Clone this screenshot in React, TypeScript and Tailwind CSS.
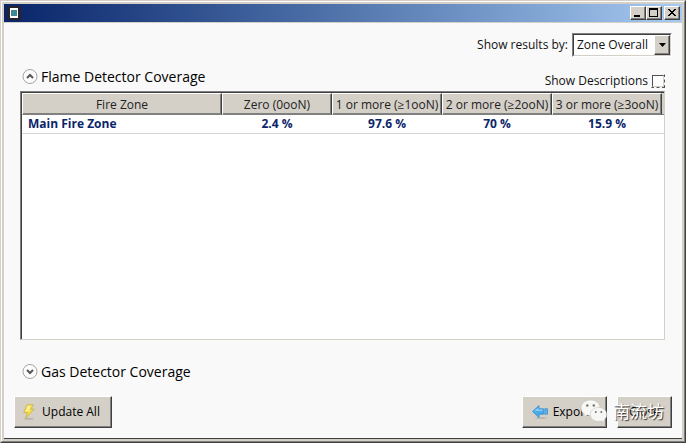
import React from "react";

const columns = ["Fire Zone", "Zero (0ooN)", "1 or more (≥1ooN)", "2 or more (≥2ooN)", "3 or more (≥3ooN)"];
const rows = [["Main Fire Zone", "2.4 %", "97.6 %", "70 %", "15.9 %"]];

const raised =
  "bg-[#d4d0c8] border border-t-white border-l-white border-r-[#404040] border-b-[#404040] shadow-[inset_-1px_-1px_0_#808080]";

function AppIcon() {
  return (
    <svg width="14" height="14" viewBox="0 0 14 14" aria-hidden="true">
      <rect width="14" height="14" rx="2" fill="#25232b" />
      <rect x="3" y="2" width="8" height="10" fill="#fff" />
      <rect x="4" y="4" width="6" height="6" fill="#3f8797" />
    </svg>
  );
}

function CaptionButton({ label, children }: { label: string; children: React.ReactNode }) {
  return (
    <button aria-label={label} className={`flex h-[14px] w-4 items-center justify-center ${raised}`}>
      <svg width="12" height="12" viewBox="0 0 12 12" className="shrink-0" shapeRendering="crispEdges">
        {children}
      </svg>
    </button>
  );
}

function TitleBar() {
  return (
    <header className="flex h-[18px] items-center justify-between bg-linear-to-r from-[#0a246a] to-[#a6caf0] pr-[2px] pl-[3px]">
      <AppIcon />
      <div className="flex">
        <CaptionButton label="Minimize">
          <rect x="2" y="8" width="6" height="2" fill="#000" />
        </CaptionButton>
        <CaptionButton label="Maximize">
          <path d="M1 1h9v9H1z M2 3v6h7V3z" fill="#000" fillRule="evenodd" />
        </CaptionButton>
        <div className="w-[2px]" />
        <CaptionButton label="Close window">
          <path
            d="M2 2h2v1h1v1h2V3h1V2h2v1H9v1H8v1H7v1h1v1h1v1h1v1H8V8H7V7H5v1H4v1H2V8h1V7h1V6h1V5H4V4H3V3H2z"
            fill="#000"
          />
        </CaptionButton>
      </div>
    </header>
  );
}

function Expander({ title, open }: { title: string; open: boolean }) {
  return (
    <button aria-expanded={open} className="flex h-5 items-center gap-[3px] text-[14px] leading-5 font-medium text-black">
      <svg width="16" height="16" viewBox="0 0 16 16" fill="none" aria-hidden="true">
        <circle cx="8" cy="7.5" r="7" fill="#fcfcfc" stroke="#a3a3a3" />
        <path d={open ? "M5 9l3-3 3 3" : "M5 6l3 3 3-3"} stroke="#555" strokeWidth="2" />
      </svg>
      {title}
    </button>
  );
}

function CoverageTable() {
  return (
    <div className="flex flex-1 border border-t-[#808080] border-r-[#d4d0c8] border-b-[#d4d0c8] border-l-[#808080] bg-white">
      <div className="flex-1 border-t border-l border-[#404040]">
        <table className="w-full table-fixed border-separate border-spacing-0">
          <colgroup>
            <col />
            <col className="w-[110px]" />
            <col className="w-[110px]" />
            <col className="w-[110px]" />
            <col className="w-[110px]" />
            <col className="w-[2px]" />
          </colgroup>
          <thead>
            <tr>
              {columns.map((c) => (
                <th
                  key={c}
                  scope="col"
                  className="h-[22px] border border-t-white border-r-[#404040] border-b-[#808080] border-l-white bg-[#d4d0c8] p-0 pt-px text-[12px] leading-[19px] font-normal whitespace-nowrap text-[#222] shadow-[inset_-1px_-1px_0_#808080]"
                >
                  {c}
                </th>
              ))}
              <td className="border-b border-[#808080] bg-[#d4d0c8] p-0" />
            </tr>
          </thead>
          <tbody>
            {rows.map((r) => (
              <tr key={r[0]} className="text-[12px] leading-[18px] font-bold text-[#0a246a]">
                <th scope="row" className="border-b border-[#d4d4d4] p-0 pl-[6px] text-left">
                  {r[0]}
                </th>
                {r.slice(1).map((v) => (
                  <td key={v} className="border-b border-[#d4d4d4] p-0 text-center">
                    {v}
                  </td>
                ))}
                <td className="border-b border-[#d4d4d4] p-0" />
              </tr>
            ))}
          </tbody>
        </table>
      </div>
    </div>
  );
}

function Bolt() {
  return (
    <svg width="16" height="16" viewBox="0 0 16 16" aria-hidden="true">
      <ellipse cx="7" cy="14.8" rx="5" ry=".9" fill="#b7b2a6" />
      <path d="M5 .8h6.300L8.800 5.200h3.400L3.600 14.400l2-5.800H1.800z" fill="#f3dc48" stroke="#c9ab3a" strokeWidth=".7" strokeLinejoin="round" />
      <path d="M5.600 1.800h3.800L7 6H9L5.200 7.800H3.200z" fill="#fbf08e" />
    </svg>
  );
}

function Arrow() {
  return (
    <svg width="17" height="16" viewBox="0 0 17 16" aria-hidden="true">
      <ellipse cx="9" cy="14" rx="6" ry="1" fill="#b9b9b4" />
      <path d="M.6 7.500L7 1.600v3.200h4.400v5.400H7v3.200z" fill="#49aceb" stroke="#3189c9" strokeWidth=".8" strokeLinejoin="round" />
      <path d="M2.400 7L6.400 3.400v2.200h4.200V7z" fill="#86cdf8" />
      <rect x="12.800" y="4.800" width="2.800" height="5.400" fill="#5db5ee" stroke="#3189c9" strokeWidth=".7" />
    </svg>
  );
}

function Watermark() {
  return (
    <div className="pointer-events-none absolute right-2 bottom-1 flex items-center gap-[5px]">
      <svg width="28" height="26" viewBox="0 0 28 26" aria-hidden="true">
        <g fill="#f7f7f5" stroke="#bdbab3" strokeWidth=".5">
          <path d="M10.500 2C5.200 2 1 5.400 1 10c0 2.600 1.300 4.700 3.500 6.100L3.600 19l3.500-1.800c1.100.3 2.200.5 3.400.5 5.300 0 9.500-3.300 9.500-7.800S15.800 2 10.500 2z" />
          <path d="M18.500 9.500c-4.600 0-8.200 3-8.200 6.900s3.600 7 8.200 7c1 0 2-.2 2.900-.4l3.200 1.700-.8-2.700c1.900-1.300 3-3.200 3-5.400 0-4-3.700-7.100-8.300-7.100z" />
        </g>
        <g fill="#77756f">
          <circle cx="7.300" cy="7.500" r="1.200" />
          <circle cx="13.800" cy="7.500" r="1.200" />
          <circle cx="15.800" cy="14" r="1" />
          <circle cx="21.300" cy="14" r="1" />
        </g>
      </svg>
      <span className="font-['Noto_Sans_CJK_SC',sans-serif] text-[17px] leading-6 whitespace-nowrap text-white [text-shadow:1px_1px_1px_#333]">
        南流坊
      </span>
    </div>
  );
}

export default function App() {
  const button = `flex h-8 items-center justify-center text-[12px] text-black ${raised}`;
  return (
    <div className="flex min-h-screen flex-col border-t border-r border-b border-l border-t-[#d4d0c8] border-r-[#404040] border-b-[#404040] border-l-[#d4d0c8] bg-[#f9f9f9] font-['Open_Sans','Noto_Sans',sans-serif] text-[12px] text-[#111]">
      <div className="flex flex-1 flex-col border border-t-white border-r-[#808080] border-b-[#808080] border-l-white">
        <div className="flex flex-1 flex-col border-2 border-[#d4d0c8]">
          <TitleBar />
          <main className="flex flex-1 flex-col border-t border-b border-t-[#d4d0c8] border-b-[#404040] px-[10px] pt-[10px] pb-[10px]">
            <div className="flex items-center justify-end gap-1">
              <label htmlFor="scope">Show results by:</label>
              <div className="relative border border-t-[#808080] border-r-white border-b-white border-l-[#808080]">
                <select
                  id="scope"
                  className="block h-[22px] w-[98px] appearance-none border border-t-[#404040] border-r-[#d4d0c8] border-b-[#d4d0c8] border-l-[#404040] bg-white pr-4 pl-[3px] text-[12px] leading-5"
                >
                  <option>Zone Overall</option>
                </select>
                <span className={`pointer-events-none absolute top-px right-px bottom-px flex w-4 items-center justify-center ${raised}`}>
                  <svg width="7" height="4" viewBox="0 0 7 4" aria-hidden="true">
                    <path d="M0 0h7L3.500 4z" fill="#000" />
                  </svg>
                </span>
              </div>
            </div>

            <section className="flex flex-1 flex-col pt-[10px] pr-[7px] pl-[6px]">
              <div className="flex items-start justify-between pl-[2px]">
                <Expander title="Flame Detector Coverage" open />
                <label className="flex items-center gap-[3px] pt-1 leading-5">
                  Show Descriptions
                  <span className="flex border border-dashed border-t-transparent border-r-[#555] border-b-[#555] border-l-transparent">
                    <input
                      type="checkbox"
                      className="size-3 appearance-none border border-t-[#505050] border-r-[#d4d0c8] border-b-[#d4d0c8] border-l-[#505050] bg-white"
                    />
                  </span>
                </label>
              </div>
              <CoverageTable />
            </section>

            <section className="pt-[22px] pl-2">
              <Expander title="Gas Detector Coverage" open={false} />
            </section>

            <footer className="relative flex gap-[10px] pt-[14px]">
              <button className={`${button} mr-auto w-[98px] gap-1 pr-1`}>
                <Bolt />
                Update All
              </button>
              <button className={`${button} w-[85px] gap-1 pr-2`}>
                <Arrow />
                Export
              </button>
              <button className={`${button} w-[55px]`}>Close</button>
              <Watermark />
            </footer>
          </main>
        </div>
      </div>
    </div>
  );
}
